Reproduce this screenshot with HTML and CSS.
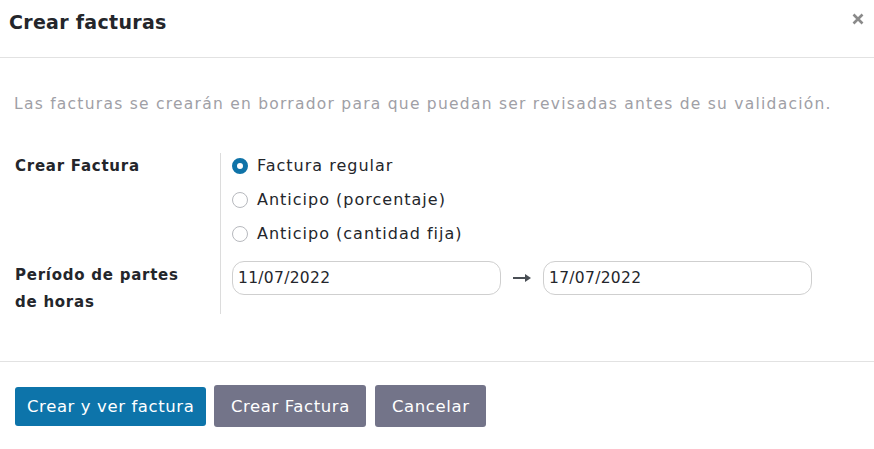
FILE: index.html
```html
<!DOCTYPE html>
<html lang="es">
<head>
<meta charset="utf-8">
<title>Crear facturas</title>
<link rel="stylesheet" href="styles.css">
</head>
<body>
<div class="modal">
  <header class="modal-header">
    <h4 class="modal-title">Crear facturas</h4>
    <button class="btn-close" aria-label="Cerrar">
      <svg width="12" height="12" viewBox="0 0 12 12"><path d="M1.5 1.5 L10.5 10.5 M10.5 1.5 L1.5 10.5" stroke="#8a8a8a" stroke-width="2.6" stroke-linecap="butt"/></svg>
    </button>
  </header>
  <main class="modal-body">
    <p class="desc">Las facturas se crearán en borrador para que puedan ser revisadas antes de su validación.</p>
    <div class="form">
      <div class="label l1">Crear Factura</div>
      <div class="field radios">
        <label class="radio"><span class="dot checked"></span>Factura regular</label>
        <label class="radio"><span class="dot"></span>Anticipo (porcentaje)</label>
        <label class="radio"><span class="dot"></span>Anticipo (cantidad fija)</label>
      </div>
      <div class="label l2">Período de partes de horas</div>
      <div class="field dates">
        <div class="input">11/07/2022</div>
        <svg class="arrow" width="18" height="10" viewBox="0 0 18 10"><path d="M0 4 H12 V1 L18 5 L12 9 V6 H0 Z" fill="#4a4f55"/></svg>
        <div class="input">17/07/2022</div>
      </div>
    </div>
  </main>
  <footer class="modal-footer">
    <button class="btn primary">Crear y ver factura</button>
    <button class="btn secondary">Crear Factura</button>
    <button class="btn secondary">Cancelar</button>
  </footer>
</div>
</body>
</html>
```
FILE: styles.css
```css
* { box-sizing: border-box; }
html, body { margin: 0; padding: 0; background: #fff; }
body {
  font-family: "DejaVu Sans", "Open Sans", sans-serif;
  color: #212529;
  width: 874px;
  height: 449px;
  overflow: hidden;
}
.modal { width: 874px; }
.modal-header {
  height: 58px;
  border-bottom: 1px solid #e2e2e2;
  display: flex;
  justify-content: space-between;
  align-items: flex-start;
  padding: 8px 10px 0 9px;
}
.modal-title {
  margin: 0;
  font-size: 19px;
  line-height: 28px;
  font-weight: 600;
  letter-spacing: 0.3px;
  color: #24262b;
}
.btn-close {
  border: 0;
  background: none;
  padding: 0;
  margin-top: 5px;
  width: 12px;
  height: 12px;
  display: flex;
}
.modal-body {
  padding: 35px 14px 0 14px;
  height: 304px;
  border-bottom: 1px solid #e2e2e2;
}
.desc {
  margin: 0;
  font-size: 15.5px;
  line-height: 22px;
  letter-spacing: 1.25px;
  color: #9fa0a6;
  white-space: nowrap;
}
.form {
  margin-top: 38px;
  display: grid;
  grid-template-columns: 206px 1fr;
  row-gap: 0;
}
.label {
  font-weight: 700;
  font-size: 15px;
  letter-spacing: 0.75px;
  color: #24262b;
  padding-left: 1px;
}
.l1 { line-height: 26px; padding-bottom: 13px; }
.l2 { line-height: 27px; width: 185px; padding-top: 2px; }
.field {
  border-left: 1px solid #dcdcdc;
  padding-left: 11px;
}
.radios {
  display: flex;
  flex-direction: column;
  gap: 8px;
  padding-bottom: 13px;
}
.radio {
  display: flex;
  align-items: center;
  gap: 9px;
  font-size: 16px;
  letter-spacing: 1px;
  line-height: 26px;
  color: #24262b;
}
.dot {
  width: 16px;
  height: 16px;
  border-radius: 50%;
  border: 1px solid #b7b9be;
  background: #fff;
  flex: none;
}
.dot.checked {
  border: 5px solid #0f73a8;
  background: #fff;
}
.dates {
  display: flex;
  align-items: flex-start;
  gap: 12px;
  padding-top: 1px;
  height: 54px;
}
.input {
  width: 269px;
  height: 34px;
  border: 1px solid #cfcfcf;
  border-radius: 12px;
  padding-left: 5px;
  font-size: 15.5px;
  letter-spacing: 0.3px;
  line-height: 32px;
  color: #24262b;
}
.arrow { margin-top: 12px; margin-left: 0; }
.modal-footer {
  display: flex;
  gap: 8px;
  padding: 23px 15px 0 15px;
  align-items: center;
}
.btn {
  border: 0;
  border-radius: 3px;
  color: #fff;
  font-family: inherit;
  font-size: 16.5px;
  letter-spacing: 0.6px;
  height: 40px;
  padding: 0 12px;
}
.primary { background: #0d74aa; height: 39px; }
.secondary { background: #737489; height: 42px; padding: 0 16.5px; }
.secondary + .secondary { margin-left: 1px; }
```
